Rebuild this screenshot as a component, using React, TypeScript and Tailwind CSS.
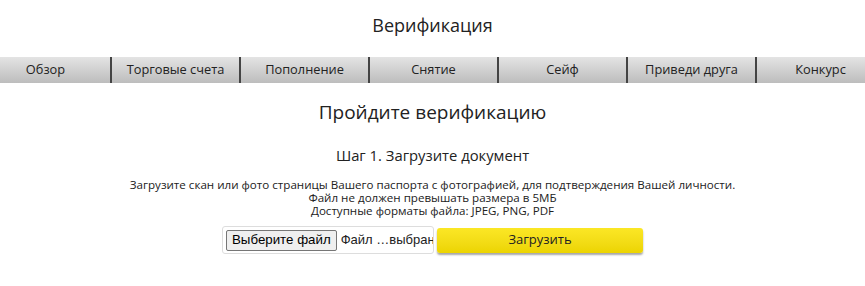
import React from "react";

const tabs = ["Обзор", "Торговые счета", "Пополнение", "Снятие", "Сейф", "Приведи друга", "Конкурс"];

export default function App() {
  return (
    <div className="w-[865px] h-[286px] bg-white overflow-hidden text-[#222]" style={{ fontFamily: '"Open Sans", "Noto Sans", sans-serif' }}>
      <h1 className="pt-[12px] h-[57px] text-center text-[18px] leading-[26px]">Верификация</h1>

      <div className="flex justify-center h-[26px] bg-gradient-to-b from-[#e4e4e4] to-[#bdbdbd] overflow-hidden">
        <div className="flex shrink-0 w-[903px]">
          {tabs.map((t, i) => (
            <div
              key={t}
              className={
                "w-[129px] shrink-0 flex items-center justify-center text-[12.8px] text-[#222] " +
                (i > 0 ? "border-l-2 border-[#444]" : "")
              }
            >
              {t}
            </div>
          ))}
        </div>
      </div>

      <h2 className="mt-[16px] text-center text-[19px] leading-[26px]">Пройдите верификацию</h2>

      <h3 className="mt-[20px] text-center text-[14.8px] leading-[20px]">Шаг 1. Загрузите документ</h3>

      <div className="mt-[13px] text-center text-[11.6px] leading-[13px]">
        <p>Загрузите скан или фото страницы Вашего паспорта с фотографией, для подтверждения Вашей личности.</p>
        <p>Файл не должен превышать размера в 5МБ</p>
        <p>Доступные форматы файла: JPEG, PNG, PDF</p>
      </div>

      <div className="mt-[9px] flex justify-center items-center gap-[3px]">
        <div
          className="flex items-center w-[212px] h-[28px] border border-[#ddd] rounded-[3px] px-[3px] gap-[4px] overflow-hidden"
          style={{ fontFamily: '"Liberation Sans", Arial, sans-serif' }}
        >
          <span className="h-[21px] px-[5px] flex items-center bg-[#efefef] border border-[#767676] rounded-[2px] text-[13.3px] text-black whitespace-nowrap">
            Выберите файл
          </span>
          <span className="text-[13px] text-[#222] whitespace-nowrap">Файл …выбран</span>
        </div>
        <button className="w-[206px] h-[25px] rounded-[3px] bg-gradient-to-b from-[#fbe725] to-[#ecd400] shadow-[0_2px_2px_rgba(0,0,0,0.35)] text-[13px] text-[#222]">
          Загрузить
        </button>
      </div>
    </div>
  );
}
